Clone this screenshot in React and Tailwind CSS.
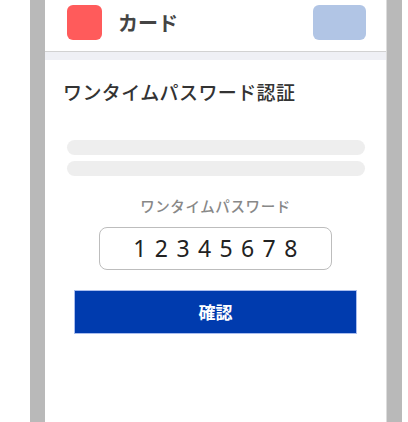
import React from "react";

const jp = { fontFamily: '"Noto Sans CJK JP", "Noto Sans", sans-serif' };

export default function App() {
  return (
    <div className="flex w-[408px] h-[422px] bg-white overflow-hidden" style={jp}>
      <div className="w-[30px] shrink-0 bg-white" />
      <div className="w-[15px] shrink-0 bg-[#b9b9b9]" />
      <div className="w-[342px] shrink-0 bg-white border-r border-[#dcdcdc] flex flex-col">
        <div className="h-[52px] shrink-0 border-b border-[#d2d2d2] flex items-start pt-[5px] pl-[22px] pr-[20px]">
          <div className="w-[35px] h-[35px] rounded-[6px] bg-[#ff5b5b]" />
          <div className="ml-[16px] h-[35px] flex items-center text-[20px] font-bold text-[#444] leading-none">
            カード
          </div>
          <div className="ml-auto w-[53px] h-[35px] rounded-[6px] bg-[#b1c5e5]" />
        </div>
        <div className="h-[8px] shrink-0 bg-[#eff0f5]" />
        <div className="pt-[18px] pl-[18px] text-[19px] font-medium text-[#333] leading-[28px] tracking-[0.4px]">
          ワンタイムパスワード認証
        </div>
        <div className="mt-[34px] mx-[22px] mr-[21px] flex flex-col gap-[6px]">
          <div className="h-[15px] rounded-full bg-[#eeeeee]" />
          <div className="h-[15px] rounded-full bg-[#eeeeee]" />
        </div>
        <div className="mt-[20px] text-center text-[14.5px] font-medium text-[#888] leading-[20px] tracking-[0.6px]">
          ワンタイムパスワード
        </div>
        <div className="mt-[11px] flex justify-center">
          <div className="w-[233px] h-[43px] rounded-[8px] border border-[#bdbdbd] flex items-center justify-center">
            <span
              className="text-[23px] font-normal text-[#222] tracking-[8.4px] pl-[8px] leading-none"
              style={{ fontFamily: '"Noto Sans", "Open Sans", sans-serif' }}
            >
              12345678
            </span>
          </div>
        </div>
        <div className="mt-[20px] flex justify-center">
          <div className="w-[283px] h-[44px] bg-[#003bae] border border-[#a9bdee] flex items-center justify-center text-white text-[17px] font-bold">
            確認
          </div>
        </div>
      </div>
      <div className="w-[15px] shrink-0 bg-[#b9b9b9]" />
      <div className="w-[6px] shrink-0 bg-white" />
    </div>
  );
}
